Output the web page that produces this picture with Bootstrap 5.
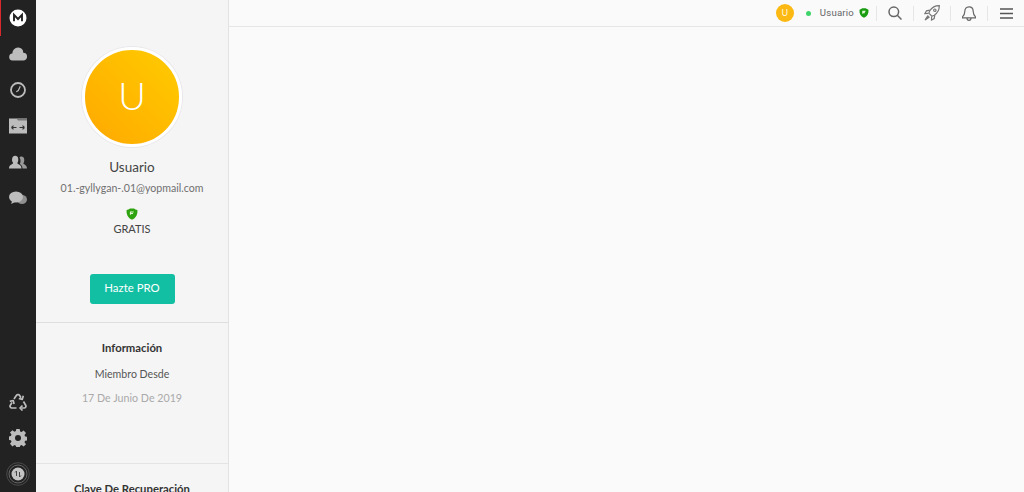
<!DOCTYPE html>
<html lang="es">
<head>
  <meta charset="UTF-8">
  <title>Usuario</title>
  <link href="https://cdn.jsdelivr.net/npm/bootstrap@5.3.2/dist/css/bootstrap.min.css" rel="stylesheet">
  <style>
    html, body { height: 100%; overflow: hidden; }
    body { font-family: Lato, "Liberation Sans", sans-serif; background: #fafafa; color: #333; }
    .app-shell { height: 492px; }
    .side-rail { width: 36px; background: #222; height: 492px; flex: none; }
    .rail-item { width: 36px; height: 36px; flex: none; }
    .rail-active { box-shadow: inset 1px 0 0 #d9272e; }
    .rail-foot { height: 36px; }
    .profile-panel { width: 193px; flex: none; background: #f5f5f5; border-right: 1px solid #e2e2e2; height: 492px; overflow: hidden; }
    .profile-top { height: 323px; padding-top: 47px; border-bottom: 1px solid #dedede; }
    .avatar-big { width: 100px; height: 100px; border-radius: 50%; background: linear-gradient(45deg, #ffa800, #ffcc00); border: 3px solid #fff; box-shadow: 0 0 0 1px #e8e8ec; color: #fff; font-size: 38px; line-height: 90px; font-weight: 300; }
    .user-name { font-size: 13.500px; line-height: 18px; margin-top: 11px; color: #444; }
    .user-mail { font-size: 10.600px; line-height: 16px; margin-top: 4px; color: #707070; }
    .plan-icon { margin-top: 12px; height: 12px; }
    .plan-name { font-size: 11px; line-height: 14px; margin-top: 2px; color: #444; }
    .btn-pro { background: #13bfa3; color: #fff; font-size: 11.400px; line-height: 16px; width: 85px; height: 30px; padding: 5px 0 7px; border: 0; border-radius: 3px; margin-top: 38px; }
    .btn-pro:hover { background: #10ab92; color: #fff; }
    .info-block { height: 141px; padding-top: 18px; border-bottom: 1px solid #e4e4e4; }
    .info-title { font-size: 11.300px; font-weight: 700; line-height: 14px; color: #333; }
    .info-label { font-size: 10.600px; line-height: 14px; margin-top: 12px; color: #555; }
    .info-date { font-size: 10.700px; line-height: 14px; margin-top: 10px; color: #aaa; }
    .recovery-block { padding-top: 18px; }
    .main-area { min-width: 0; }
    .top-bar { height: 27px; border-bottom: 1px solid #e6e6e6; background: #fafafa; }
    .avatar-small { width: 18px; height: 18px; border-radius: 50%; background: #fdb913; color: #fff8e0; font-size: 9px; line-height: 18px; margin-right: 12px; }
    .status-dot { width: 5px; height: 5px; border-radius: 50%; background: #3fd46a; margin-right: 9px; }
    .top-name { font-size: 9.600px; color: #666; margin-right: 5px; font-family: Roboto, sans-serif; letter-spacing: .2px; }
    .top-shield { margin-right: 7px; }
    .top-sep { width: 1px; height: 15px; background: #e6e6e6; }
    .top-btn { width: 36px; height: 26px; }
  </style>
</head>
<body>

<div class="app-shell d-flex">
  <div class="side-rail d-flex flex-column">
    <div class="rail-item rail-active d-flex align-items-center justify-content-center">
      <svg width="18" height="18" viewBox="0 0 18 18"><circle cx="9" cy="9" r="8.5" fill="#fff"/><path d="M5 12.300V5.800l4 4.200 4-4.200v6.500" fill="none" stroke="#222" stroke-width="1.900"/></svg>
    </div>
    <div class="rail-item d-flex align-items-center justify-content-center">
      <svg width="18" height="14" viewBox="0 0 18 14"><path d="M4 13.500a3.500 3.500 0 0 1-.6-7A5.600 5.600 0 0 1 9.300.6a5.300 5.300 0 0 1 5 5.100 3.900 3.900 0 0 1-.300 7.800z" fill="#bcbcbc"/></svg>
    </div>
    <div class="rail-item d-flex align-items-center justify-content-center">
      <svg width="18" height="18" viewBox="0 0 18 18"><circle cx="9" cy="9" r="7" fill="none" stroke="#bcbcbc" stroke-width="1.800"/><path d="M11.300 5.300 9.300 9.500 7.300 10.800" fill="none" stroke="#bcbcbc" stroke-width="1.200"/></svg>
    </div>
    <div class="rail-item d-flex align-items-center justify-content-center">
      <svg width="18" height="16" viewBox="0 0 18 16"><path d="M0 .5h18v15H0z" fill="#bcbcbc"/><path d="M0 .5h7.500L9 2.500h9v-2z" fill="#777"/><path d="M2.500 9.500h5M2.500 9.500l2-1.800M2.500 9.500l2 1.800M10.500 9.500h5M15.500 9.500l-2-1.800M15.500 9.500l-2 1.800" fill="none" stroke="#333" stroke-width="1.100"/></svg>
    </div>
    <div class="rail-item d-flex align-items-center justify-content-center">
      <svg width="18" height="14" viewBox="0 0 18 14"><path d="M11.500 13.500H18c0-3-2-3.800-3.300-4.500-.5-.4-.2-1 .1-1.600.8-1.200 1-5.900-2.300-5.900-1 0-1.600.4-2 1 1.500 2 1.200 5.100.3 6.500 1.500.9 2.700 2.200 2.700 4.500z" fill="#999"/><path d="M0 13.500c0-3 2.300-3.900 3.700-4.700.6-.4.3-1.100-.1-1.700C2.700 5.700 2.600.8 6.200.8s3.500 4.900 2.600 6.300c-.4.6-.7 1.300-.1 1.700 1.400.8 3.800 1.700 3.800 4.700z" fill="#bcbcbc"/></svg>
    </div>
    <div class="rail-item d-flex align-items-center justify-content-center">
      <svg width="18" height="14" viewBox="0 0 18 14"><ellipse cx="13" cy="8.500" rx="5" ry="4.500" fill="#8f8f8f"/><ellipse cx="7" cy="6" rx="7" ry="5.500" fill="#bcbcbc"/><path d="M3 10l-.8 3L6 11z" fill="#bcbcbc"/></svg>
    </div>
    <div class="flex-grow-1"></div>
    <div class="rail-item d-flex align-items-center justify-content-center">
      <svg width="18" height="18" viewBox="0 0 18 18" fill="none" stroke="#bcbcbc" stroke-width="1.700" stroke-linejoin="round"><path d="M5 6 7.500 2.200c.5-.8 2.500-.8 3 0l1.500 2.500"/><path d="M14.300 2.800 13.300 6.300 9.800 5.500"/><path d="M14.500 8.500l2.300 4c.5 1-.3 2.500-1.500 2.500h-3"/><path d="M13.500 17.500 11 15l2.500-2.500"/><path d="M7.500 15H2.700c-1.200 0-2-1.500-1.500-2.500L3 9.500"/><path d="M.8 8.300 4.200 7.500l.9 3.500"/></svg>
    </div>
    <div class="rail-item d-flex align-items-center justify-content-center">
      <svg width="18" height="18" viewBox="0 0 18 18"><path d="M7.300 0h3.400l.4 2.500 1.500.6 2-1.500 2.400 2.400-1.500 2 .6 1.500 2.400.4v3.400l-2.400.4-.6 1.500 1.500 2-2.400 2.400-2-1.500-1.500.6-.4 2.400H7.300l-.4-2.400-1.500-.6-2 1.500L1 14.800l1.500-2-.6-1.500L-.500 10.900V7.500l2.400-.4.600-1.500L1 3.600 3.400 1.200l2 1.500 1.500-.6z" fill="#bcbcbc"/><circle cx="9" cy="9" r="3" fill="#222"/></svg>
    </div>
    <div class="rail-foot d-flex align-items-center justify-content-center">
      <svg width="24" height="24" viewBox="0 0 24 24"><circle cx="12" cy="12" r="11.300" fill="none" stroke="#555" stroke-width=".8"/><circle cx="12" cy="12" r="9" fill="none" stroke="#777" stroke-width=".8"/><circle cx="12" cy="12" r="6.500" fill="#c4c4c4"/><path d="M10.500 9v5M10.500 9 9 10.500M13.500 15v-5M13.500 15l1.500-1.500" fill="none" stroke="#444" stroke-width="1"/></svg>
    </div>
  </div>

  <div class="profile-panel text-center">
    <div class="profile-top">
      <div class="avatar-big mx-auto">U</div>
      <div class="user-name">Usuario</div>
      <div class="user-mail">01.-gyllygan-.01@yopmail.com</div>
      <div class="plan-icon">
        <svg class="d-block mx-auto" width="12" height="12" viewBox="0 0 12 12"><path d="M.6 2C2 1.600 3 1 4 .4h4c1 .6 2 1.200 3.400 1.600.4 4.500-1.400 8-5.400 9.800C2 10 .2 6.500.6 2z" fill="#2fa30f"/><path d="M4.500 6.800V4h3.200M4.500 5.500h2.500" fill="none" stroke="#dff5d0" stroke-width="1.200"/></svg>
      </div>
      <div class="plan-name">GRATIS</div>
      <button type="button" class="btn btn-pro">Hazte PRO</button>
    </div>
    <div class="info-block">
      <div class="info-title">Información</div>
      <div class="info-label">Miembro Desde</div>
      <div class="info-date">17 De Junio De 2019</div>
    </div>
    <div class="recovery-block">
      <div class="info-title">Clave De Recuperación</div>
    </div>
  </div>

  <div class="main-area flex-grow-1">
    <div class="top-bar d-flex align-items-center justify-content-end">
      <div class="avatar-small text-center">U</div>
      <div class="status-dot"></div>
      <div class="top-name">Usuario</div>
      <svg class="top-shield" width="10" height="10" viewBox="0 0 12 12"><path d="M.6 2C2 1.600 3 1 4 .4h4c1 .6 2 1.200 3.400 1.600.4 4.500-1.400 8-5.400 9.800C2 10 .2 6.500.6 2z" fill="#1a9c12"/><path d="M4.500 6.800V4h3.200M4.500 5.500h2.500" fill="none" stroke="#dff5d0" stroke-width="1.300"/></svg>
      <div class="top-sep"></div>
      <div class="top-btn d-flex align-items-center justify-content-center">
        <svg width="14" height="14" viewBox="0 0 14 14" fill="none" stroke="#666" stroke-width="1.500"><circle cx="5.800" cy="5.800" r="4.800"/><path d="M9.300 9.300 13.500 13.500"/></svg>
      </div>
      <div class="top-sep"></div>
      <div class="top-btn d-flex align-items-center justify-content-center">
        <svg width="16" height="16" viewBox="0 0 16 16" fill="none" stroke="#777" stroke-width="1.200"><path d="M15.300.7c-4-.1-7 1.300-9.500 5l-1 2.400 3.100 3.100 2.400-1c3.700-2.500 5.100-5.500 5-9.500z"/><path d="M5.800 5.200 2.500 5.800 1 8.500l3.300-.1M10.800 10.200l-.6 3.300-2.700 1.500.1-3.300"/><path d="M4 10.500 1 15l4.500-3" fill="#777"/><circle cx="10.800" cy="5.200" r="1.200"/></svg>
      </div>
      <div class="top-sep"></div>
      <div class="top-btn d-flex align-items-center justify-content-center">
        <svg width="14" height="15" viewBox="0 0 14 15" fill="none" stroke="#666" stroke-width="1.200"><path d="M7 .8c2.800 0 4.200 2 4.200 4.700 0 3 1.200 4.200 2.300 5.300v1H.5v-1c1.100-1.100 2.300-2.300 2.300-5.300C2.800 2.800 4.200.8 7 .8z"/><path d="M5 12c0 1.500.8 2.300 2 2.300S9 13.500 9 12"/></svg>
      </div>
      <div class="top-sep"></div>
      <div class="top-btn d-flex align-items-center justify-content-center">
        <svg width="13" height="11" viewBox="0 0 13 11" fill="none" stroke="#555" stroke-width="1.400"><path d="M0 1h13M0 5.500h13M0 10h13"/></svg>
      </div>
    </div>
  </div>
</div>

<script src="https://cdn.jsdelivr.net/npm/bootstrap@5.3.2/dist/js/bootstrap.bundle.min.js"></script>
</body>
</html>
